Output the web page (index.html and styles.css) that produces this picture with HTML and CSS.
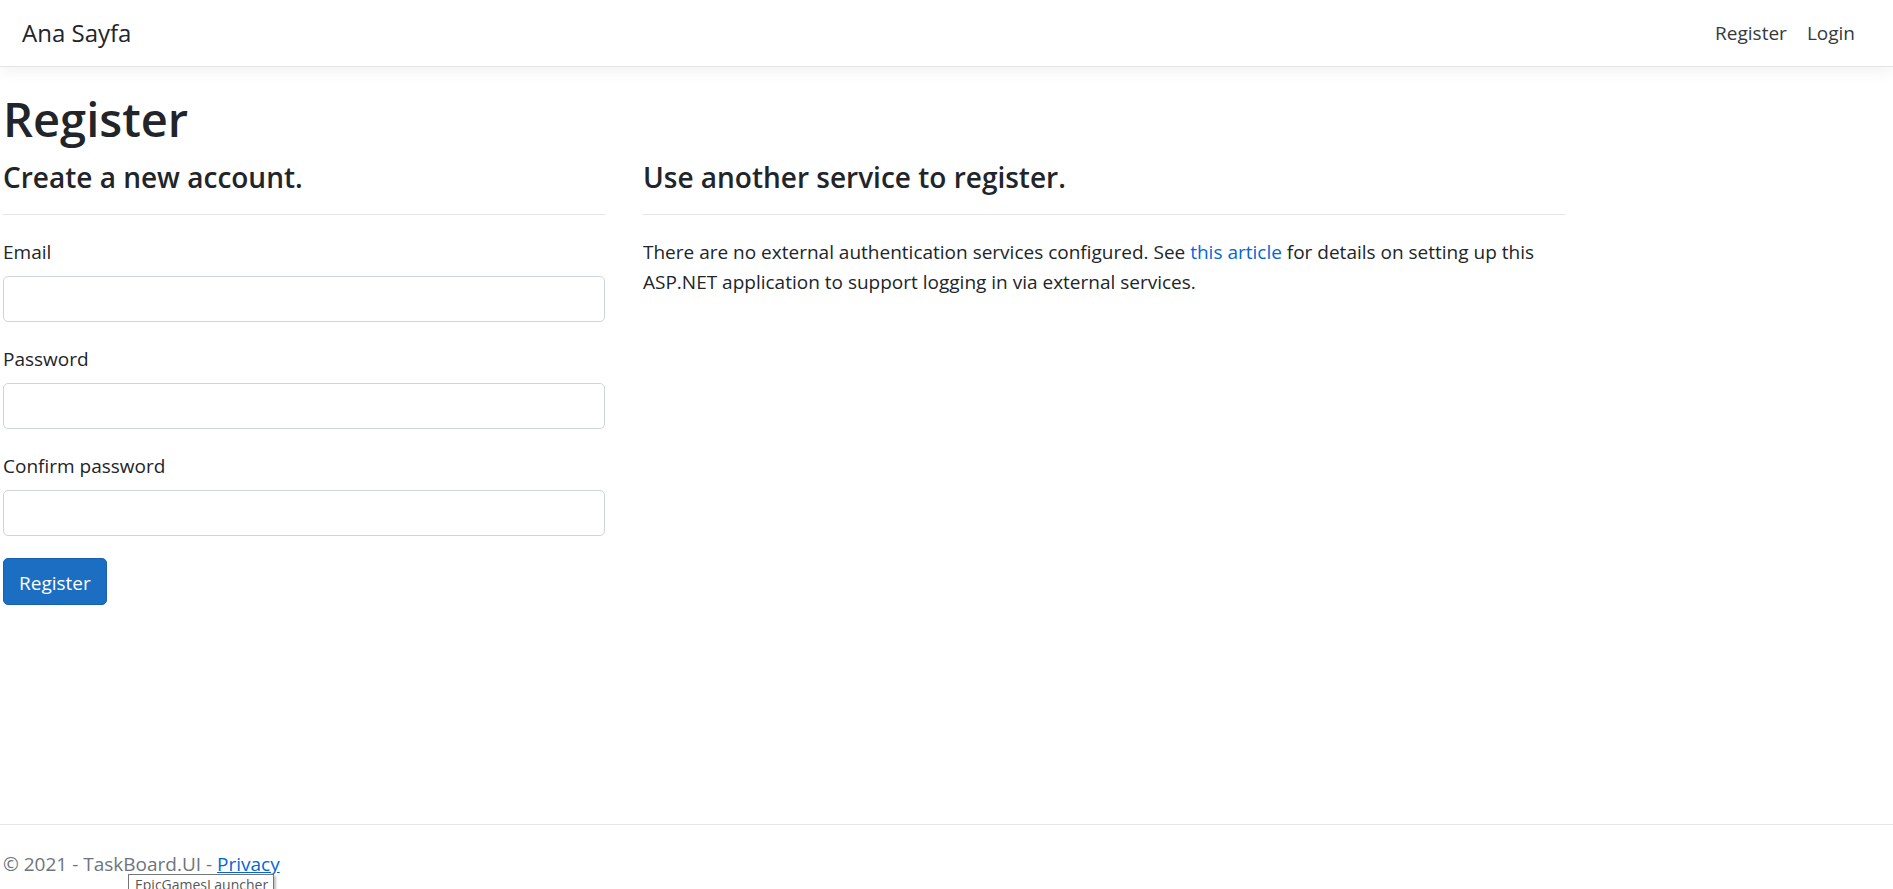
FILE: index.html
```html
<!DOCTYPE html>
<html lang="en">
<head>
<meta charset="utf-8">
<title>Register - TaskBoard.UI</title>
<link rel="stylesheet" href="styles.css">
</head>
<body>
<header class="navbar">
  <a class="brand" href="#">Ana Sayfa</a>
  <nav class="nav">
    <a class="nav-link" href="#">Register</a>
    <a class="nav-link" href="#">Login</a>
  </nav>
</header>
<main class="main">
  <h1 class="title">Register</h1>
  <div class="row">
    <section class="col-left">
      <h4 class="subtitle">Create a new account.</h4>
      <hr class="rule">
      <form class="form">
        <div class="form-group">
          <label class="label" for="email">Email</label>
          <input class="input" id="email" type="email">
        </div>
        <div class="form-group">
          <label class="label" for="pw">Password</label>
          <input class="input" id="pw" type="password">
        </div>
        <div class="form-group">
          <label class="label" for="cpw">Confirm password</label>
          <input class="input" id="cpw" type="password">
        </div>
        <button class="btn" type="button">Register</button>
      </form>
    </section>
    <section class="col-right">
      <h4 class="subtitle">Use another service to register.</h4>
      <hr class="rule">
      <p class="text">There are no external authentication services configured. See <a class="link" href="#">this article</a> for details on setting up this ASP.NET application to support logging in via external services.</p>
    </section>
  </div>
</main>
<footer class="footer">
  <span class="muted">&copy; 2021 - TaskBoard.UI - </span><a class="link privacy" href="#">Privacy</a>
  <div class="tooltip">EpicGamesLauncher</div>
</footer>
</body>
</html>
```
FILE: styles.css
```css
* { box-sizing: border-box; }
html, body { height: 100%; }
body {
  margin: 0;
  font-family: "Open Sans", "Noto Sans", sans-serif;
  font-size: 19px;
  line-height: 30px;
  color: #212529;
  background: #fff;
  display: flex;
  flex-direction: column;
  overflow: hidden;
}
.navbar {
  height: 67px;
  flex: none;
  display: flex;
  align-items: center;
  justify-content: space-between;
  padding: 0 28px 0 22px;
  border-bottom: 1px solid #e5e5e5;
  box-shadow: 0 5px 14px rgba(0, 0, 0, 0.05);
  position: relative;
  z-index: 1;
}
.brand {
  font-size: 24px;
  color: #212529;
  text-decoration: none;
}
.nav { display: flex; }
.nav-link {
  color: #343a40;
  text-decoration: none;
  padding: 0 10px;
}
.main {
  flex: 1;
  padding: 23px 3px 0 3px;
}
.title {
  margin: 0 0 12px 0;
  font-size: 47px;
  line-height: 58px;
  font-weight: 600;
}
.row {
  display: grid;
  grid-template-columns: 602px 922px;
  column-gap: 38px;
}
.subtitle {
  margin: 0;
  font-size: 28px;
  line-height: 34px;
  font-weight: 600;
}
.rule {
  border: 0;
  border-top: 1px solid #e5e5e5;
  margin: 20px 0 22px 0;
}
.form-group { margin-bottom: 22px; }
.label {
  display: block;
  margin-bottom: 9px;
}
.input {
  display: block;
  width: 100%;
  height: 46px;
  border: 1px solid #ced4da;
  border-radius: 5px;
  font: inherit;
  padding: 0 14px;
}
.btn {
  height: 47px;
  padding: 2px 15px 0 15px;
  font: inherit;
  color: #fff;
  background: #1b6ec2;
  border: 1px solid #1861ac;
  border-radius: 5px;
}
.text { margin: 0; }
.link { color: #0366d6; text-decoration: none; }
.footer {
  flex: none;
  height: 65px;
  border-top: 1px solid #e5e5e5;
  padding: 24px 3px 0 3px;
  white-space: nowrap;
  position: relative;
}
.muted { color: #6c757d; }
.privacy { text-decoration: underline; }
.tooltip {
  position: absolute;
  left: 128px;
  top: 49px;
  width: 146px;
  height: 24px;
  border: 1px solid #767676;
  background: #fff;
  color: #575757;
  font-size: 14px;
  line-height: 20px;
  padding: 0 6px;
  box-shadow: 2px 2px 2px rgba(0, 0, 0, 0.25);
}
```
